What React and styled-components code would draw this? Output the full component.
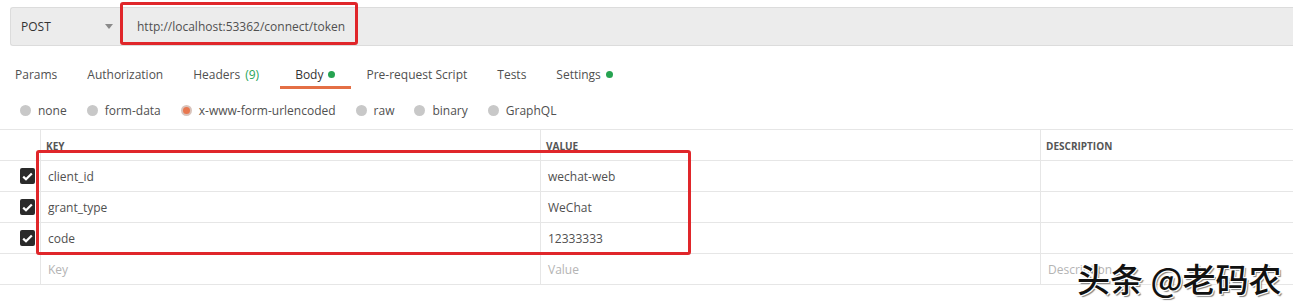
import React from 'react';
import styled, { createGlobalStyle, css } from 'styled-components';

const GlobalStyle = createGlobalStyle`
  body {
    margin: 0;
    background: #fff;
    font-family: "Open Sans", "Liberation Sans", sans-serif;
    font-size: 12px;
    color: #505050;
  }
`;

const Page = styled.div`
  position: relative;
  width: 1293px;
  height: 301px;
  overflow: hidden;
  padding-top: 7px;
  box-sizing: border-box;
`;

const UrlBar = styled.div`
  display: flex;
  align-items: center;
  height: 39px;
  margin-left: 10px;
  background: #ececec;
  border: 1px solid #dcdcdc;
  border-right: none;
  border-radius: 3px 0 0 3px;
  box-sizing: border-box;
  position: relative;
`;

const Method = styled.div`
  display: flex;
  align-items: center;
  justify-content: space-between;
  width: 111px;
  padding: 0 9px 0 10px;
  box-sizing: border-box;
  color: #333;
  font-size: 12px;
`;

const Caret = styled.span`
  width: 0;
  height: 0;
  border-left: 4px solid transparent;
  border-right: 4px solid transparent;
  border-top: 5px solid #8a8a8a;
`;

const Url = styled.div`
  padding-left: 15px;
  color: #505050;
  font-size: 12px;
`;

const Tabs = styled.div`
  display: flex;
  height: 46px;
  align-items: stretch;
  margin-top: 5px;
`;

const Tab = styled.div`
  display: flex;
  align-items: center;
  gap: 5px;
  padding: 0 ${(p) => (p.wide ? '21px' : '15px')} 0 15px;
  color: #505050;
  font-size: 12px;
  position: relative;
  ${(p) =>
    p.active &&
    css`
      color: #333;
      padding-right: 16px;
      &::after {
        content: '';
        position: absolute;
        left: 0;
        right: 0;
        bottom: 8px;
        height: 3px;
        background: #e46f45;
      }
    `};
`;

const Count = styled.span`
  color: #29a65a;
`;

const Dot = styled.span`
  width: 7px;
  height: 7px;
  border-radius: 50%;
  background: #26a351;
  display: inline-block;
`;

const Radios = styled.div`
  display: flex;
  align-items: center;
  gap: 20px;
  padding-left: 20px;
  height: 28px;
  margin-top: -1px;
`;

const RadioItem = styled.label`
  display: flex;
  align-items: center;
  gap: 7px;
  color: #505050;
  font-size: 12px;
`;

const Circle = styled.span`
  width: 11px;
  height: 11px;
  border-radius: 50%;
  background: #c8c8c8;
  box-sizing: border-box;
  ${(p) =>
    p.checked &&
    css`
      background: #e8774f;
      border: 2px solid #d9c3bb;
    `};
`;

const Table = styled.div`
  margin-top: 5px;
  border-top: 1px solid #e6e6e6;
`;

const Row = styled.div`
  display: grid;
  grid-template-columns: 40px 500px 500px 1fr;
  height: 31px;
  border-bottom: 1px solid #e6e6e6;
  box-sizing: border-box;
`;

const Cell = styled.div`
  display: flex;
  align-items: center;
  padding-left: 7px;
  border-left: 1px solid #e6e6e6;
  color: ${(p) => (p.placeholder ? '#b4b4b4' : '#505050')};
  font-size: 12px;
  ${(p) =>
    p.head &&
    css`
      padding-left: 5px;
      font-size: 10px;
      font-weight: 700;
      color: #555;
      padding-top: 1px;
    `};
`;

const CheckCell = styled.div`
  display: flex;
  align-items: center;
  justify-content: flex-end;
  padding-right: 5px;
`;

const Check = styled.span`
  width: 15px;
  height: 16px;
  border-radius: 2px;
  background: #2a2a2a;
  display: flex;
  align-items: center;
  justify-content: center;
`;

const Highlight = styled.div`
  position: absolute;
  border: 3px solid #e0262a;
  border-radius: 3px;
  box-sizing: border-box;
`;

const Watermark = styled.div`
  position: absolute;
  left: 1077px;
  top: 254px;
  font-family: "Noto Sans CJK SC", sans-serif;
  font-size: 33px;
  font-weight: 500;
  color: #111;
  text-shadow: 1px 1px 0 #fff, -1px -1px 0 #fff, 1px -1px 0 #fff, -1px 1px 0 #fff,
    2px 2px 1px rgba(0, 0, 0, 0.5);
`;

const tabs = [
  { label: 'Params' },
  { label: 'Authorization' },
  { label: 'Headers', count: '(9)' },
  { label: 'Body', dot: true, active: true },
  { label: 'Pre-request Script' },
  { label: 'Tests' },
  { label: 'Settings', dot: true },
];

const bodyTypes = ['none', 'form-data', 'x-www-form-urlencoded', 'raw', 'binary', 'GraphQL'];

const params = [
  ['client_id', 'wechat-web'],
  ['grant_type', 'WeChat'],
  ['code', '12333333'],
];

function Tick() {
  return (
    <svg width="11" height="9" viewBox="0 0 11 9">
      <path d="M1.2 4.6 L4 7.3 L9.8 1.4" fill="none" stroke="#fff" strokeWidth="2.2" />
    </svg>
  );
}

export default function App() {
  return (
    <>
      <GlobalStyle />
      <Page>
        <UrlBar>
          <Method>
            POST
            <Caret />
          </Method>
          <Url>http://localhost:53362/connect/token</Url>
        </UrlBar>

        <Tabs>
          {tabs.map((t) => (
            <Tab key={t.label} active={t.active} wide={!!t.count}>
              {t.label}
              {t.count && <Count>{t.count}</Count>}
              {t.dot && <Dot />}
            </Tab>
          ))}
        </Tabs>

        <Radios>
          {bodyTypes.map((b) => (
            <RadioItem key={b}>
              <Circle checked={b === 'x-www-form-urlencoded'} />
              {b}
            </RadioItem>
          ))}
        </Radios>

        <Table>
          <Row>
            <CheckCell />
            <Cell head>KEY</Cell>
            <Cell head>VALUE</Cell>
            <Cell head>DESCRIPTION</Cell>
          </Row>
          {params.map(([k, v]) => (
            <Row key={k}>
              <CheckCell>
                <Check>
                  <Tick />
                </Check>
              </CheckCell>
              <Cell>{k}</Cell>
              <Cell>{v}</Cell>
              <Cell />
            </Row>
          ))}
          <Row>
            <CheckCell />
            <Cell placeholder>Key</Cell>
            <Cell placeholder>Value</Cell>
            <Cell placeholder>Description</Cell>
          </Row>
        </Table>

        <Highlight style={{ left: 120, top: 2, width: 238, height: 43 }} />
        <Highlight style={{ left: 36, top: 150, width: 655, height: 105 }} />
        <Watermark>头条 @老码农</Watermark>
      </Page>
    </>
  );
}
